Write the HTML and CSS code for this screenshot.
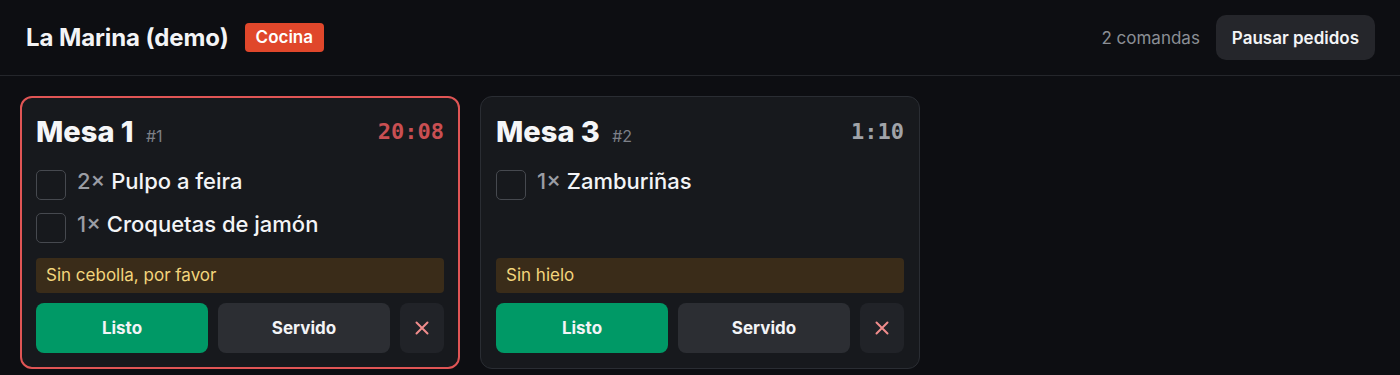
FILE: index.html
```html
<!DOCTYPE html>
<html lang="es">
<head>
<meta charset="utf-8">
<title>La Marina (demo) — Cocina</title>
<link rel="stylesheet" href="styles.css">
</head>
<body>
<header class="topbar">
  <div class="brand">
    <h1 class="brand-title">La Marina (demo)</h1>
    <span class="badge">Cocina</span>
  </div>
  <div class="topbar-right">
    <span class="count">2 comandas</span>
    <button class="pause-btn">Pausar pedidos</button>
  </div>
</header>
<main class="board">
  <article class="ticket ticket-late">
    <div class="ticket-head">
      <h2 class="ticket-title">Mesa 1 <span class="ticket-num">#1</span></h2>
      <span class="timer timer-late">20:08</span>
    </div>
    <ul class="items">
      <li class="item"><span class="check"></span><span class="qty">2×</span><span class="name">Pulpo a feira</span></li>
      <li class="item"><span class="check"></span><span class="qty">1×</span><span class="name">Croquetas de jamón</span></li>
    </ul>
    <div class="note">Sin cebolla, por favor</div>
    <div class="actions">
      <button class="btn btn-ready">Listo</button>
      <button class="btn btn-served">Servido</button>
      <button class="btn btn-cancel" aria-label="Cancelar"><svg class="x-icon" viewBox="0 0 14 14" width="14" height="14"><path d="M1.5 1.5 L12.5 12.5 M12.5 1.5 L1.5 12.5"/></svg></button>
    </div>
  </article>
  <article class="ticket">
    <div class="ticket-head">
      <h2 class="ticket-title">Mesa 3 <span class="ticket-num">#2</span></h2>
      <span class="timer">1:10</span>
    </div>
    <ul class="items">
      <li class="item"><span class="check"></span><span class="qty">1×</span><span class="name">Zamburiñas</span></li>
    </ul>
    <div class="note">Sin hielo</div>
    <div class="actions">
      <button class="btn btn-ready">Listo</button>
      <button class="btn btn-served">Servido</button>
      <button class="btn btn-cancel" aria-label="Cancelar"><svg class="x-icon" viewBox="0 0 14 14" width="14" height="14"><path d="M1.5 1.5 L12.5 12.5 M12.5 1.5 L1.5 12.5"/></svg></button>
    </div>
  </article>
</main>
</body>
</html>
```
FILE: styles.css
```css
* { box-sizing: border-box; }
html, body { margin: 0; padding: 0; }
body {
  background: #0d0e12;
  color: #f3f4f6;
  font-family: Inter, "Noto Sans", sans-serif;
  height: 375px;
  overflow: hidden;
}
.topbar {
  height: 76px;
  display: flex;
  align-items: center;
  justify-content: space-between;
  padding: 0 25px 0 26px;
  border-bottom: 1px solid #24262b;
}
.brand { display: flex; align-items: center; gap: 16px; }
.brand-title {
  margin: 0;
  font-size: 24px;
  font-weight: 700;
  color: #f3f4f6;
  letter-spacing: -0.1px;
}
.badge {
  background: #e0472b;
  color: #fff;
  font-size: 17px;
  font-weight: 600;
  height: 29px;
  line-height: 29px;
  padding: 0 11px;
  border-radius: 4px;
}
.topbar-right { display: flex; align-items: center; gap: 16px; }
.count { color: #8b8e95; font-size: 17px; }
.pause-btn {
  font-family: inherit;
  background: #25262b;
  color: #f3f4f6;
  border: 0;
  border-radius: 10px;
  height: 45px;
  padding: 0 16px;
  font-size: 17px;
  font-weight: 600;
}
.board {
  display: grid;
  grid-template-columns: 440px 440px;
  gap: 20px;
  padding: 20px;
  align-items: stretch;
}
.ticket {
  background: #17191d;
  border: 1px solid #2a2d33;
  border-radius: 12px;
  padding: 17px 15px 15px;
  display: flex;
  flex-direction: column;
}
.ticket-late {
  border: 2px solid #e05555;
  padding: 16px 14px 14px;
}
.ticket-head {
  display: flex;
  align-items: center;
  justify-content: space-between;
  height: 34px;
}
.ticket-title {
  margin: 6px 0 0;
  font-size: 29px;
  font-weight: 800;
  line-height: 34px;
  color: #f5f6f8;
  letter-spacing: 0;
}
.ticket-num {
  font-size: 16px;
  font-weight: 400;
  color: #7d8088;
  margin-left: 6px;
  letter-spacing: 0;
}
.timer {
  font-family: "DejaVu Sans Mono", monospace;
  font-weight: 700;
  font-size: 22px;
  color: #a0a3a8;
}
.timer-late { color: #c94f52; }
.items {
  list-style: none;
  margin: 22px 0 0;
  padding: 0;
  display: flex;
  flex-direction: column;
  gap: 13px;
}
.item {
  display: flex;
  align-items: flex-start;
  height: 30px;
  font-size: 22px;
  line-height: 22px;
  font-weight: 500;
}
.check {
  width: 30px;
  height: 30px;
  border: 1.5px solid #46494f;
  border-radius: 5px;
  margin-right: 11px;
  flex: none;
}
.qty { color: #9a9da4; margin-right: 6px; }
.name { color: #f3f4f6; }
.note {
  margin-top: auto;
  background: #3a2c19;
  color: #f3d57c;
  font-size: 17px;
  height: 35px;
  line-height: 35px;
  padding: 0 10px;
  border-radius: 4px;
}
.ticket-late .note { margin-top: 15px; }
.actions {
  display: grid;
  grid-template-columns: 1fr 1fr 44px;
  gap: 10px;
  margin-top: 10px;
}
.btn {
  font-family: inherit;
  border: 0;
  border-radius: 8px;
  height: 50px;
  font-size: 17px;
  font-weight: 700;
  color: #f3f4f6;
}
.btn-ready { background: #009966; }
.btn-served { background: #2c2e33; }
.btn-cancel {
  background: #212328;
  padding: 0;
  display: flex;
  align-items: center;
  justify-content: center;
}
.x-icon {
  fill: none;
  stroke: #f08c8c;
  stroke-width: 2;
  stroke-linecap: round;
}
```
